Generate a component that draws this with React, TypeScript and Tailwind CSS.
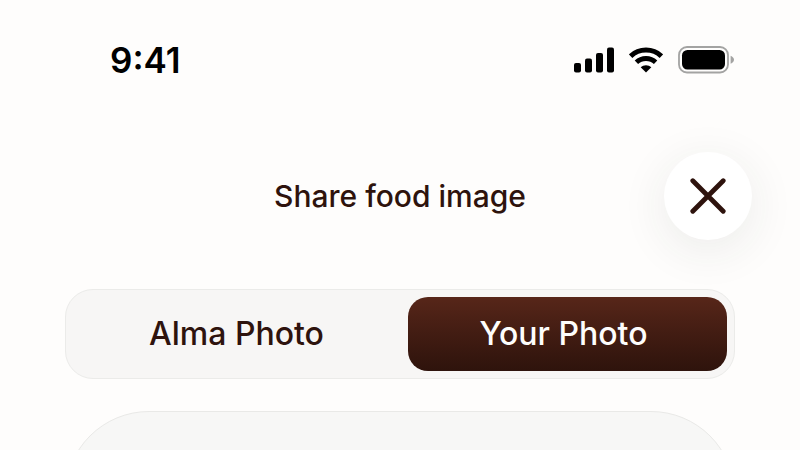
import { useState } from "react";
import { clsx } from "clsx";

const tabs = [
  { id: "alma", label: "Alma Photo", align: "pl-2" },
  { id: "yours", label: "Your Photo", align: "pr-2" },
];

function SignalIcon() {
  return (
    <svg width="40" height="26" viewBox="0 0 40 26" fill="currentColor" aria-hidden="true">
      <rect x="0" y="16" width="7" height="9.5" rx="2" />
      <rect x="11" y="11.5" width="7" height="14" rx="2" />
      <rect x="22" y="6" width="7" height="19.5" rx="2" />
      <rect x="33" y="0.5" width="7" height="25" rx="2" />
    </svg>
  );
}

function WifiIcon() {
  return (
    <svg width="34" height="26" viewBox="0 0 34 26" fill="none" stroke="currentColor" aria-hidden="true">
      <path d="M1.6 9.2C10 1 24 1 32.4 9.2" strokeWidth="5" />
      <path d="M7.4 15.3C12.6 10.2 21.4 10.2 26.6 15.3" strokeWidth="4.8" />
      <path d="M17 25.6L11.7 20.3C14.5 17.4 19.5 17.4 22.3 20.3Z" fill="currentColor" stroke="none" />
    </svg>
  );
}

function BatteryIcon() {
  return (
    <svg width="56" height="28" viewBox="0 0 56 28" fill="none" aria-hidden="true">
      <rect x="1" y="1" width="49" height="25.5" rx="8" stroke="#a3a3a2" strokeWidth="1.8" />
      <rect x="4" y="4" width="43" height="19.5" rx="5.5" fill="currentColor" />
      <path d="M52.6 9.8C54.6 10.6 56 12.1 56 13.8C56 15.5 54.6 17 52.6 17.8Z" fill="#a3a3a2" />
    </svg>
  );
}

function StatusBar() {
  return (
    <div className="flex h-30 shrink-0 items-center justify-between pr-[66px] pl-[110px] text-black">
      <time className="font-['Inter',sans-serif] text-[35px] font-semibold leading-10">9:41</time>
      <div className="flex items-center gap-[15px]">
        <SignalIcon />
        <WifiIcon />
        <BatteryIcon />
      </div>
    </div>
  );
}

export default function App() {
  const [active, setActive] = useState("yours");

  return (
    <main className="flex h-screen flex-col overflow-hidden bg-[#fefdfc] font-['Inter',sans-serif] text-[#2e130d]">
      <StatusBar />

      <header className="mt-8 grid shrink-0 grid-cols-[1fr_auto_1fr] items-center px-12">
        <h1 className="col-start-2 text-[30px] font-medium leading-10">Share food image</h1>
        <button
          type="button"
          aria-label="Close"
          className="flex size-22 items-center justify-center justify-self-end rounded-full bg-white shadow-[0_10px_48px_rgba(40,50,40,0.09)]"
        >
          <svg width="36" height="36" viewBox="0 0 36 36" fill="none" stroke="currentColor" strokeWidth="4.8" strokeLinecap="round" aria-hidden="true">
            <path d="M2.8 2.8L33.2 33.2M33.2 2.8L2.8 33.2" />
          </svg>
        </button>
      </header>

      <div className="mt-[49px] shrink-0 px-[65px]">
        <div role="tablist" className="grid grid-cols-2 gap-4 rounded-[28px] border border-[#ebebe9] bg-[#f7f6f5] p-[7px]">
          {tabs.map((tab) => (
            <button
              key={tab.id}
              type="button"
              role="tab"
              aria-selected={active === tab.id}
              onClick={() => setActive(tab.id)}
              className={clsx(
                "h-[74px] rounded-[20px] text-[32px] font-medium",
                tab.align,
                active === tab.id && "bg-linear-to-b from-[#572619] to-[#2e130c] text-[#fefdfc]"
              )}
            >
              {tab.label}
            </button>
          ))}
        </div>
      </div>

      <section aria-label="Photo preview" className="mx-[65px] mt-8 h-160 shrink-0 rounded-t-[84px] border border-[#e9e9e7] bg-[#f7f7f6]" />
    </main>
  );
}
